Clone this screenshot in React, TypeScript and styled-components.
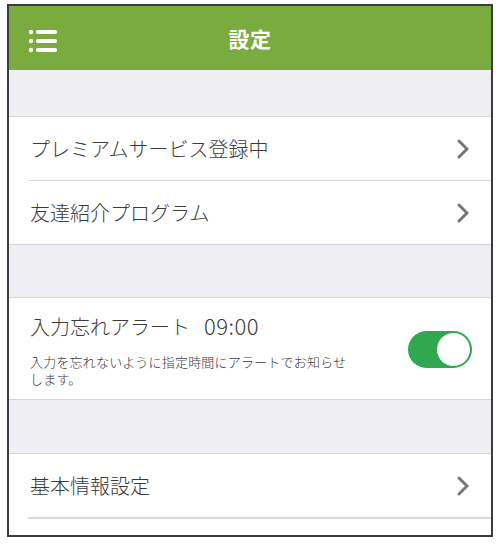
import styled, { createGlobalStyle } from "styled-components";

const GlobalStyle = createGlobalStyle`
  html, body {
    margin: 0;
    padding: 0;
    background: #ffffff;
  }
  body {
    font-family: "Noto Sans CJK JP", "Noto Sans", sans-serif;
    color: #333333;
  }
`;

const MenuIcon = () => (
  <svg width="30" height="26" viewBox="0 0 30 26">
    {[4, 13, 22].map((y) => (
      <g key={y}>
        <circle cx="3" cy={y} r="2.2" fill="#fff" />
        <line x1="10" y1={y} x2="27" y2={y} stroke="#fff" strokeWidth="4.2" strokeLinecap="round" />
      </g>
    ))}
  </svg>
);

const Chevron = () => (
  <svg width="12" height="20" viewBox="0 0 12 20">
    <polyline points="2,2 10,10 2,18" fill="none" stroke="#767676" strokeWidth="3" strokeLinecap="round" strokeLinejoin="miter" />
  </svg>
);

const App = () => {
  return (
    <Page>
      <GlobalStyle />
      <Frame>
        <Header>
          <MenuButton>
            <MenuIcon />
          </MenuButton>
          <Title>設定</Title>
        </Header>

        <Spacer height={46} />
        <Group>
          <Row>
            <RowLabel>プレミアムサービス登録中</RowLabel>
            <Chevron />
          </Row>
          <Row last>
            <RowLabel>友達紹介プログラム</RowLabel>
            <Chevron />
          </Row>
        </Group>

        <Spacer height={52} />
        <Group>
          <AlertRow>
            <AlertText>
              <RowLabel>
                入力忘れアラート<Time>09:00</Time>
              </RowLabel>
              <Note>入力を忘れないように指定時間にアラートでお知らせします。</Note>
            </AlertText>
            <Toggle>
              <Knob />
            </Toggle>
          </AlertRow>
        </Group>

        <Spacer height={53} />
        <Group>
          <Row>
            <RowLabel>基本情報設定</RowLabel>
            <Chevron />
          </Row>
          <Tail />
        </Group>
      </Frame>
    </Page>
  );
};

export default App;

// Styled Components
const Page = styled.div`
  padding: 4px 0 0 7px;
`;

const Frame = styled.div`
  width: 482px;
  height: 529px;
  border: 2px solid #3c3c3c;
  background: #efeff3;
  display: flex;
  flex-direction: column;
  overflow: hidden;
`;

const Header = styled.header`
  height: 64px;
  flex-shrink: 0;
  background: #7aab3e;
  display: flex;
  align-items: center;
  justify-content: center;
  position: relative;
`;

const MenuButton = styled.div`
  position: absolute;
  left: 19px;
  top: 22px;
  display: flex;
`;

const Title = styled.h1`
  margin: 0;
  color: #ffffff;
  font-size: 21px;
  font-weight: 700;
  letter-spacing: 0.5px;
`;

const Spacer = styled.div<{ height: number }>`
  height: ${(p) => p.height}px;
  flex-shrink: 0;
`;

const Group = styled.section`
  background: #ffffff;
  border-top: 1px solid #d6d6d9;
  border-bottom: 1px solid #d6d6d9;
  padding-left: 19px;
  flex-shrink: 0;
`;

const Row = styled.div<{ last?: boolean }>`
  height: 63px;
  display: flex;
  align-items: center;
  justify-content: space-between;
  padding-right: 22px;
  border-bottom: ${(p) => (p.last ? "none" : "1px solid #d9d9dc")};
`;

const RowLabel = styled.div`
  padding-left: 2px;
  font-size: 20px;
  font-weight: 300;
  color: #3a3a3a;
  line-height: 1.2;
`;

const Time = styled.span`
  margin-left: 14px;
  font-size: 22px;
  letter-spacing: 0.5px;
`;

const AlertRow = styled.div`
  height: 101px;
  display: flex;
  align-items: center;
  justify-content: space-between;
  padding-right: 19px;
`;

const AlertText = styled.div`
  display: flex;
  flex-direction: column;
  gap: 14px;
  margin-top: 2px;
`;

const Note = styled.p`
  margin: 0;
  padding-left: 2px;
  width: 326px;
  font-size: 13px;
  font-weight: 300;
  letter-spacing: 0.2px;
  line-height: 17px;
  color: #3a3a3a;
`;

const Toggle = styled.div`
  width: 64px;
  height: 37px;
  border-radius: 19px;
  background: #2fa84f;
  display: flex;
  align-items: center;
  justify-content: flex-end;
  padding-right: 2px;
  box-sizing: border-box;
  margin-top: 2px;
`;

const Knob = styled.div`
  width: 33px;
  height: 33px;
  border-radius: 50%;
  background: #ffffff;
`;

const Tail = styled.div`
  height: 17px;
  border-top: 1px solid #d9d9dc;
`;
